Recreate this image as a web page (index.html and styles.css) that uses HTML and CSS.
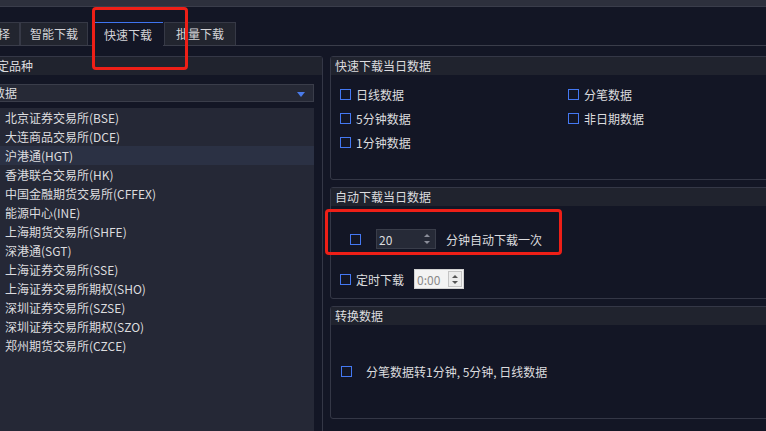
FILE: index.html
```html
<!DOCTYPE html>
<html lang="zh-CN">
<head>
  <meta charset="UTF-8">
  <title>快速下载</title>
  <link rel="stylesheet" href="styles.css">
</head>
<body>
  <div class="topbar"></div>

  <!-- Tabs -->
  <div class="tabs">
    <div class="tab tab-first">选择</div>
    <div class="tab">智能下载</div>
    <div class="tab active">快速下载</div>
    <div class="tab tab-last">批量下载</div>
  </div>

  <div class="main">
    <!-- Left: market list -->
    <div class="group left">
      <div class="group-title title-left">定品种</div>
      <div class="combo">
        <span class="combo-text">数据</span>
        <span class="combo-arrow"></span>
      </div>
      <ul class="market-list">
        <li>北京证券交易所(BSE)</li>
        <li>大连商品交易所(DCE)</li>
        <li class="selected">沪港通(HGT)</li>
        <li>香港联合交易所(HK)</li>
        <li>中国金融期货交易所(CFFEX)</li>
        <li>能源中心(INE)</li>
        <li>上海期货交易所(SHFE)</li>
        <li>深港通(SGT)</li>
        <li>上海证券交易所(SSE)</li>
        <li>上海证券交易所期权(SHO)</li>
        <li>深圳证券交易所(SZSE)</li>
        <li>深圳证券交易所期权(SZO)</li>
        <li>郑州期货交易所(CZCE)</li>
      </ul>
    </div>

    <!-- Right column -->
    <div class="right">
      <div class="group panel-today">
        <div class="group-title">快速下载当日数据</div>
        <div class="check-grid">
          <label class="check"><span class="box"></span>日线数据</label>
          <label class="check"><span class="box"></span>分笔数据</label>
          <label class="check"><span class="box"></span>5分钟数据</label>
          <label class="check"><span class="box"></span>非日期数据</label>
          <label class="check"><span class="box"></span>1分钟数据</label>
        </div>
      </div>

      <div class="group panel-auto">
        <div class="group-title">自动下载当日数据</div>
        <div class="auto-row">
          <span class="box"></span>
          <div class="spin">
            <span>20</span>
            <span class="spin-arrows"><i class="up"></i><i class="down"></i></span>
          </div>
          <span class="auto-label">分钟自动下载一次</span>
        </div>
        <div class="timer-row">
          <label class="check"><span class="box"></span>定时下载</label>
          <div class="time-spin">
            <span>0:00</span>
            <span class="time-arrows"><i class="up"></i><i class="down"></i></span>
          </div>
        </div>
      </div>

      <div class="group panel-convert">
        <div class="group-title">转换数据</div>
        <div class="convert-row">
          <span class="box"></span>
          <span>分笔数据转1分钟, 5分钟, 日线数据</span>
        </div>
      </div>
    </div>
  </div>

  <!-- red annotation marks -->
  <div class="mark mark-tab"></div>
  <div class="mark mark-auto"></div>
</body>
</html>
```

FILE: styles.css
```css
/* dark download dialog */
body {
  margin: 0;
  width: 766px;
  height: 431px;
  overflow: hidden;
  position: relative;
  background-color: #131625;
  color: #dcdcdf;
  font-family: "Noto Sans CJK SC", "Liberation Sans", sans-serif;
  font-size: 12px;
}
.topbar {
  height: 6px;
  background-color: #2d303d;
  border-bottom: 1px solid #3a3d4b;
}

/* tabs */
.tabs {
  display: flex;
  margin-top: 15px;
  margin-left: -26px;
  height: 23px;
  border-bottom: 1px solid #3a3d4a;
}
.tab {
  height: 22px;
  line-height: 22px;
  padding: 0 9px;
  background-color: #22252f;
  border: 1px solid #363946;
  border-bottom: none;
  color: #d4d4d8;
}
.tab-first {
  padding: 0 9px 0 11px;
}
.tab.active {
  margin-left: 6px;
  padding: 0 10px;
  width: 49px;
  background-color: #131625;
  border: none;
  border-top: 1px solid #3f74f0;
  height: 23px;
  margin-bottom: -1px;
  line-height: 23px;
}
.tab-last {
  margin-left: 1px;
  padding: 0 11px;
}

/* layout */
.main {
  display: flex;
  margin-top: 10px;
}
.group {
  border: 1px solid #343746;
  border-radius: 3px;
  box-sizing: border-box;
}
.group-title {
  height: 18px;
  line-height: 18px;
  padding-left: 4px;
  background-color: #20232e;
}

/* left panel */
.left {
  flex: none;
  margin-left: -10px;
  width: 333px;
  height: 400px;
  padding-right: 8px;
}
.title-left {
  padding-left: 6px;
  margin-right: -8px;
}
.combo {
  margin-top: 9px;
  height: 18px;
  box-sizing: border-box;
  background-color: #262936;
  border: 1px solid #3a3d4a;
  display: flex;
  align-items: center;
  justify-content: space-between;
  line-height: 16px;
}
.combo-text {
  padding-left: 1px;
}
.combo-arrow {
  width: 0;
  height: 0;
  margin-right: 8px;
  margin-top: 2px;
  border-left: 4px solid transparent;
  border-right: 4px solid transparent;
  border-top: 5px solid #4a7bea;
}
.market-list {
  list-style: none;
  margin: 6px 0 0 0;
  padding: 0;
  height: 340px;
  background-color: #252836;
}
.market-list li {
  height: 19px;
  line-height: 19px;
  padding-left: 14px;
}
.market-list li.selected {
  background-color: #2b3144;
}

/* right column */
.right {
  margin-left: 7px;
  width: 460px;
  flex: none;
  display: flex;
  flex-direction: column;
  gap: 7px;
}
.panel-today {
  height: 124px;
}
.panel-auto {
  height: 112px;
}
.panel-convert {
  height: 113px;
}

.box {
  display: inline-block;
  width: 11px;
  height: 11px;
  box-sizing: border-box;
  border: 1.3px solid #4478f2;
  flex: none;
}
.check {
  display: flex;
  align-items: center;
  gap: 5px;
}
.check-grid {
  display: grid;
  grid-template-columns: 228px 200px;
  grid-auto-rows: 24px;
  align-items: center;
  padding: 7px 0 0 9px;
}

.auto-row {
  display: flex;
  align-items: center;
  margin-top: 23px;
  padding-left: 19px;
  height: 20px;
}
.spin {
  margin-left: 15px;
  width: 60px;
  height: 20px;
  box-sizing: border-box;
  background-color: #262a37;
  border: 1px solid #393d4a;
  display: flex;
  align-items: center;
  justify-content: space-between;
  padding-left: 2px;
}
.spin-arrows {
  display: flex;
  flex-direction: column;
  gap: 4px;
  margin-right: 5px;
}
.spin-arrows i, .time-arrows i {
  width: 0;
  height: 0;
  border-left: 3px solid transparent;
  border-right: 3px solid transparent;
}
.spin-arrows .up {
  border-bottom: 3px solid #8b8e9a;
}
.spin-arrows .down {
  border-top: 3px solid #8b8e9a;
}
.auto-label {
  margin-left: 10px;
}

.timer-row {
  display: flex;
  align-items: center;
  margin-top: 20px;
  padding-left: 9px;
  height: 20px;
}
.time-spin {
  margin-left: 10px;
  width: 50px;
  height: 20px;
  box-sizing: border-box;
  background-color: #f3f3f3;
  border: 1px solid #d2d2d2;
  display: flex;
  align-items: center;
  justify-content: space-between;
  color: #8a8a8a;
  padding-left: 2px;
}
.time-arrows {
  width: 14px;
  height: 16px;
  margin-right: 1px;
  box-sizing: border-box;
  border: 1px solid #c4c4c4;
  background-color: #ececec;
  display: flex;
  flex-direction: column;
  align-items: center;
  justify-content: center;
  gap: 3px;
}
.time-arrows .up {
  border-bottom: 3px solid #555;
}
.time-arrows .down {
  border-top: 3px solid #555;
}

.convert-row {
  display: flex;
  align-items: center;
  gap: 14px;
  margin-top: 40px;
  padding-left: 10px;
  height: 12px;
}

/* red annotation marks */
.mark {
  position: absolute;
  border: 3px solid #ee1f17;
  border-radius: 4px;
  box-sizing: border-box;
}
.mark-tab {
  left: 92px;
  top: 7px;
  width: 96px;
  height: 63px;
}
.mark-auto {
  left: 325px;
  top: 209px;
  width: 237px;
  height: 46px;
}
```
